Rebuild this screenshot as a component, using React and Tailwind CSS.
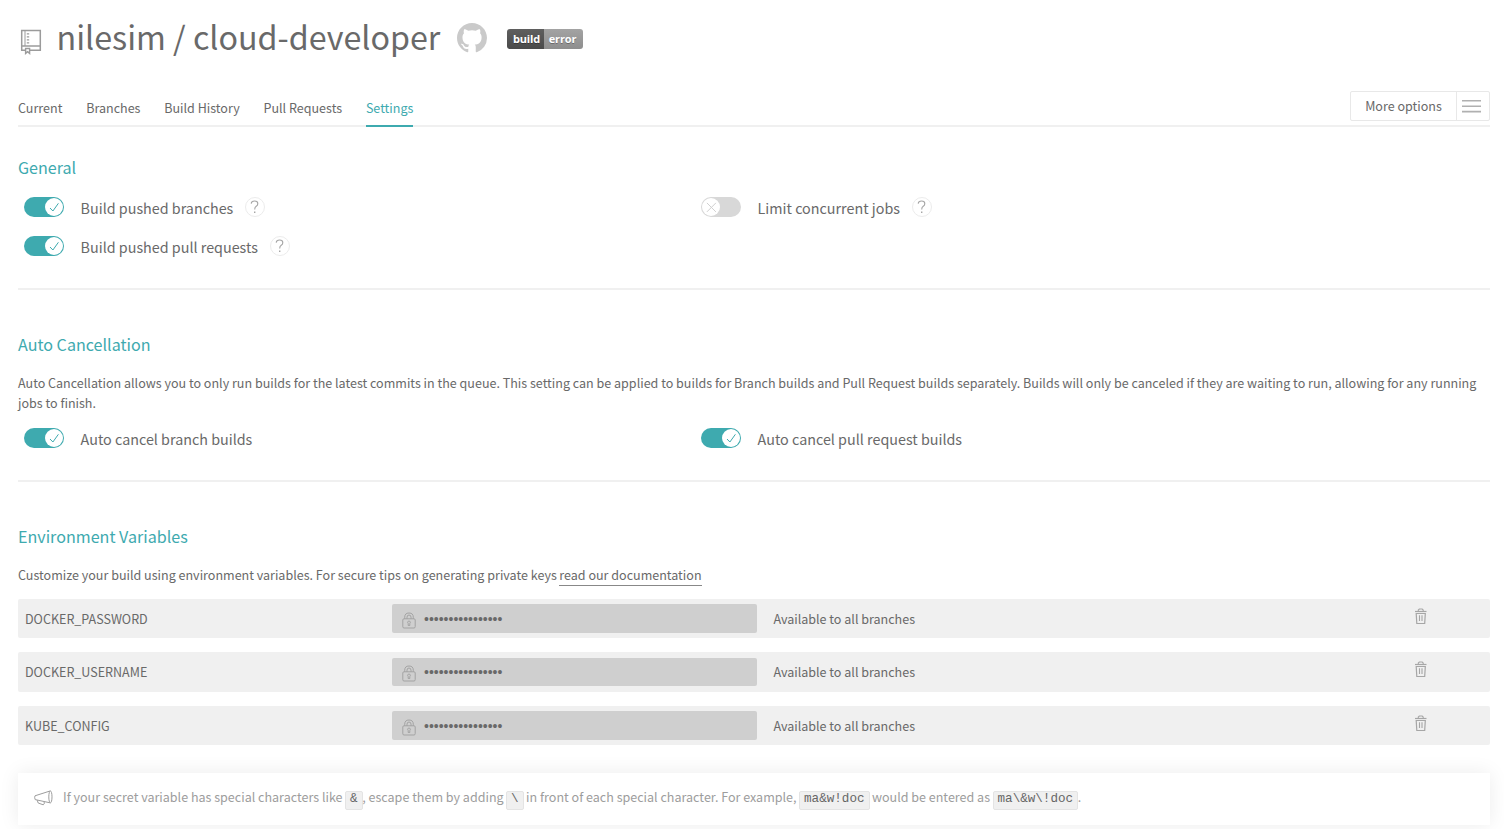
import React from "react";

const tabs = ["Current", "Branches", "Build History", "Pull Requests", "Settings"];
const variables = [
  { name: "DOCKER_PASSWORD", row: "h-[39px] mb-[14px]", field: "h-[29px] pt-[2px]", trash: "mb-[4px]" },
  { name: "DOCKER_USERNAME", row: "h-[40px] mb-[14px]", field: "h-[28px] pt-[1px]", trash: "mb-[6px]" },
  { name: "KUBE_CONFIG", row: "h-[39px]", field: "h-[29px] pt-[2px]", trash: "mb-[4px]" },
];

function RepoIcon() {
  return (
    <svg className="block shrink-0" width="22" height="26" viewBox="0 0 22 26" fill="none" stroke="#9b9b9b">
      <path d="M5.5 21.2H1.7V1.6H20.3V21.2H10" strokeWidth="1.5" />
      <path d="M1.7 17H20.3" strokeWidth="1.5" />
      <path d="M5 1.5V17" strokeWidth="1" />
      <path d="M8 4.2V15.5" strokeWidth="2.4" strokeDasharray="1.3 1.7" />
      <path d="M5.6 19.5H9.6V24.4L7.6 22.7L5.6 24.4Z" strokeWidth="1.4" />
    </svg>
  );
}

function GithubIcon() {
  return (
    <svg className="block shrink-0" width="30" height="30" viewBox="0 0 16 16" fill="#cacaca">
      <path d="M8 0C3.58 0 0 3.58 0 8c0 3.54 2.29 6.53 5.47 7.59.4.07.55-.17.55-.38 0-.19-.01-.82-.01-1.49-2.01.37-2.53-.49-2.69-.94-.09-.23-.48-.94-.82-1.13-.28-.15-.68-.52-.01-.53.63-.01 1.08.58 1.23.82.72 1.21 1.87.87 2.33.66.07-.52.28-.87.51-1.07-1.78-.2-3.64-.89-3.64-3.95 0-.87.31-1.59.82-2.15-.08-.2-.36-1.02.08-2.12 0 0 .67-.21 2.2.82.64-.18 1.32-.27 2-.27s1.36.09 2 .27c1.53-1.04 2.2-.82 2.2-.82.44 1.1.16 1.92.08 2.12.51.56.82 1.27.82 2.15 0 3.07-1.87 3.75-3.65 3.95.29.25.54.73.54 1.48 0 1.07-.01 1.93-.01 2.2 0 .21.15.46.55.38A8.01 8.01 0 0 0 16 8c0-4.42-3.58-8-8-8z" />
    </svg>
  );
}

function MenuIcon() {
  return (
    <svg className="ml-[5px] mt-[8px] block" width="19" height="13" viewBox="0 0 19 13" fill="none" stroke="#b0b0b0" strokeWidth="1.6">
      <path d="M0 .8H19M0 6.2H19M0 11.6H19" />
    </svg>
  );
}

function LockIcon() {
  return (
    <svg className="mt-[2px] block shrink-0" width="14" height="17" viewBox="0 0 14 17" fill="none" stroke="#a3a3a3" strokeWidth="1">
      <path d="M2.7 6.8V5.3Q2.7 1 7 1T11.3 5.3V6.8" />
      <path d="M5 6.8V5.2Q5 3 7 3T9 5.2V6.8" />
      <path d="M2 6.8H12Q13.2 6.8 13.2 8V14.7Q13.2 16 12 16H2Q.8 16 .8 14.7V8Q.8 6.8 2 6.8Z" />
      <path d="M7 9a1.4 1.4 0 0 1 .8 2.5V13.5H6.2V11.5A1.4 1.4 0 0 1 7 9Z" />
    </svg>
  );
}

function TrashIcon() {
  return (
    <svg className="block" width="12" height="17" viewBox="0 0 12 17" fill="none" stroke="#a6a6a6">
      <path d="M0 3.5H11.5" strokeWidth="1.2" />
      <path d="M3.3 3.2V2L4.3 1H7.2L8.2 2V3.2" strokeWidth="1.1" />
      <path d="M1.2 5.5H10.3L9.7 15.5H1.8Z" strokeWidth="1.2" />
      <path d="M4.5 7.3V13M7 7.3V13" strokeWidth="1.1" />
    </svg>
  );
}

function MegaphoneIcon() {
  return (
    <svg className="block shrink-0" width="19" height="16" viewBox="0 0 19 16" fill="none" stroke="#9d9d9d" strokeWidth="1" strokeLinejoin="round">
      <path d="M16 1L1 5.8Q.2 7.3 1.2 9.6L16 12.8" />
      <ellipse cx="16.4" cy="6.9" rx="1.6" ry="6" />
      <path d="M3.2 10.2L4.2 13L9.2 14.8L10.2 13.9V11.7" />
    </svg>
  );
}

function Toggle({ on }) {
  return on ? (
    <span className="flex h-[20px] w-[40px] shrink-0 justify-end rounded-full bg-[#3eaaaf] p-px">
      <span className="flex h-[18px] w-[18px] items-center justify-center rounded-full bg-white">
        <svg width="12" height="12" viewBox="0 0 12 12" fill="none" stroke="#3eaaaf" strokeWidth="1">
          <path d="M2 7L4.9 10L10.4 2.3" />
        </svg>
      </span>
    </span>
  ) : (
    <span className="flex h-[20px] w-[40px] shrink-0 rounded-full bg-[#d8d8d8] p-px">
      <span className="flex h-[18px] w-[18px] items-center justify-center rounded-full bg-white">
        <svg width="12" height="12" viewBox="0 0 12 12" fill="none" stroke="#d0d0d0" strokeWidth="1">
          <path d="M1.9 1.9L10.9 10.9M10.9 1.9L1.9 10.9" />
        </svg>
      </span>
    </span>
  );
}

function Help() {
  return (
    <span className="ml-[11.6px] flex h-[20px] w-[20px] shrink-0 items-center justify-center rounded-full border border-[#ececec]">
      <svg width="10" height="14" viewBox="0 0 10 14" fill="none" stroke="#a5a5a5" strokeWidth="1.1">
        <path d="M1.2 3.6Q1.4 1 4.6 1Q7.8 1 7.8 3.7Q7.8 5.2 6.2 6.3Q4.7 7.3 4.7 9.4" />
        <path d="M4.7 11.5V13" strokeWidth="1.4" />
      </svg>
    </span>
  );
}

function Setting({ on, label, help }) {
  return (
    <div className="flex h-[20px] items-center pl-[6px]">
      <Toggle on={on} />
      <span className="ml-[16.6px] mt-px whitespace-nowrap text-[14.33px] leading-[20px]">{label}</span>
      {help && <Help />}
    </div>
  );
}

function Heading({ children }) {
  return <h2 className="-mt-px pb-px text-[16.1px] leading-[24px] text-[#3eaaaf]">{children}</h2>;
}

function Code({ children }) {
  return (
    <code className="-ml-[0.3px] -mr-[0.4px] inline-block h-[19px] rounded-[2px] border border-[#e4e4e4] bg-[#f0f0f0] px-[4px] font-['Liberation_Mono',monospace] text-[12.6px] leading-[15px] text-[#666]">
      {children}
    </code>
  );
}

export default function App() {
  return (
    <div className="h-[829px] overflow-hidden bg-white pl-[18px] pr-[14px] font-['Noto_Sans_CJK_SC',sans-serif] text-[12.54px] text-[#696969]">
      <header className="flex h-[76px] items-center pl-[2px]">
        <div className="mt-[8px]"><RepoIcon /></div>
        <h1 className="-mt-[4px] ml-[14.5px] w-[400.5px] whitespace-nowrap text-[32.24px] leading-[48px]">nilesim / cloud-developer</h1>
        <GithubIcon />
        <div className="ml-[20px] mt-[2px] flex h-[20px] w-[76px] overflow-hidden rounded-[3px] font-['Open_Sans',sans-serif] text-[11px] font-bold leading-[19px] tracking-[-0.15px] text-white [text-shadow:0_1px_0_rgba(0,0,0,0.3)]">
          <span className="w-[37px] bg-linear-to-b from-[#5f5f5f] to-[#4a4a4a] pl-[2px] text-center">build</span>
          <span className="w-[39px] bg-linear-to-b from-[#a3a3a3] to-[#8e8e8e] pr-[2px] text-center">error</span>
        </div>
      </header>

      <nav className="flex h-[51px] items-end justify-between border-b-2 border-[#f0f0f0]">
        <ul className="flex gap-[23.8px]">
          {tabs.map((tab) => (
            <li
              key={tab}
              className={
                tab === "Settings"
                  ? "-mb-[2px] h-[29px] border-b-2 border-[#3eaaaf] leading-[20px] text-[#3eaaaf]"
                  : "h-[27px] leading-[20px]"
              }
            >
              {tab}
            </li>
          ))}
        </ul>
        <button className="mb-[4px] flex h-[30px] w-[140px] rounded-[2px] border border-[#e8e8e8]">
          <span className="w-[106px] border-r border-[#e8e8e8] text-center leading-[28px]">More options</span>
          <MenuIcon />
        </button>
      </nav>

      <section className="h-[163px] border-b-2 border-[#f0f0f0] pt-[29px]">
        <Heading>General</Heading>
        <div className="mt-[17px] grid grid-cols-[677px_1fr] gap-y-[19px]">
          <Setting on label="Build pushed branches" help />
          <Setting label="Limit concurrent jobs" help />
          <Setting on label="Build pushed pull requests" help />
        </div>
      </section>

      <section className="h-[192px] border-b-2 border-[#f0f0f0] pt-[43px]">
        <Heading>Auto Cancellation</Heading>
        <p className="mt-[16px] leading-[20px]">
          Auto Cancellation allows you to only run builds for the latest commits in the queue. This setting can be applied to builds for Branch builds and Pull Request builds separately. Builds will only be canceled if they are waiting to run, allowing for any running jobs to finish.
        </p>
        <div className="mt-[15px] grid grid-cols-[677px_1fr]">
          <Setting on label="Auto cancel branch builds" />
          <Setting on label="Auto cancel pull request builds" />
        </div>
      </section>

      <section className="pt-[43px]">
        <Heading>Environment Variables</Heading>
        <p className="mt-[16px] h-[34px] leading-[20px]">
          Customize your build using environment variables. For secure tips on generating private keys{" "}
          <a className="-ml-[0.3px] inline-block h-[21px] border-b border-[#888]">read our documentation</a>
        </p>
        {variables.map((v) => (
          <div key={v.name} className={`flex items-center rounded-[2px] bg-[#f0f0f0] pl-[7px] ${v.row}`}>
            <span className="w-[367px] leading-[20px]">{v.name}</span>
            <span className={`flex w-[365px] items-center rounded-[2px] bg-[#cfcfcf] pl-[10px] ${v.field}`}>
              <LockIcon />
              <span className="ml-[8px] font-['Liberation_Sans',sans-serif] text-[14px]">••••••••••••••••</span>
            </span>
            <span className="ml-[16.4px] w-[641.6px] leading-[20px]">Available to all branches</span>
            <span className={v.trash}><TrashIcon /></span>
          </div>
        ))}
      </section>

      <aside className="mt-[28px] flex h-[52px] items-center bg-white pb-[2px] pl-[16px] text-[#9d9d9d] shadow-[0_0_20px_rgba(0,0,0,0.08)]">
        <MegaphoneIcon />
        <p className="ml-[10px] whitespace-nowrap leading-[20px]">
          If your secret variable has special characters like <Code>&amp;</Code>, escape them by adding <Code>\</Code> in front of each special character. For example, <Code>ma&amp;w!doc</Code> would be entered as <Code>ma\&amp;w\!doc</Code>.
        </p>
      </aside>
    </div>
  );
}
